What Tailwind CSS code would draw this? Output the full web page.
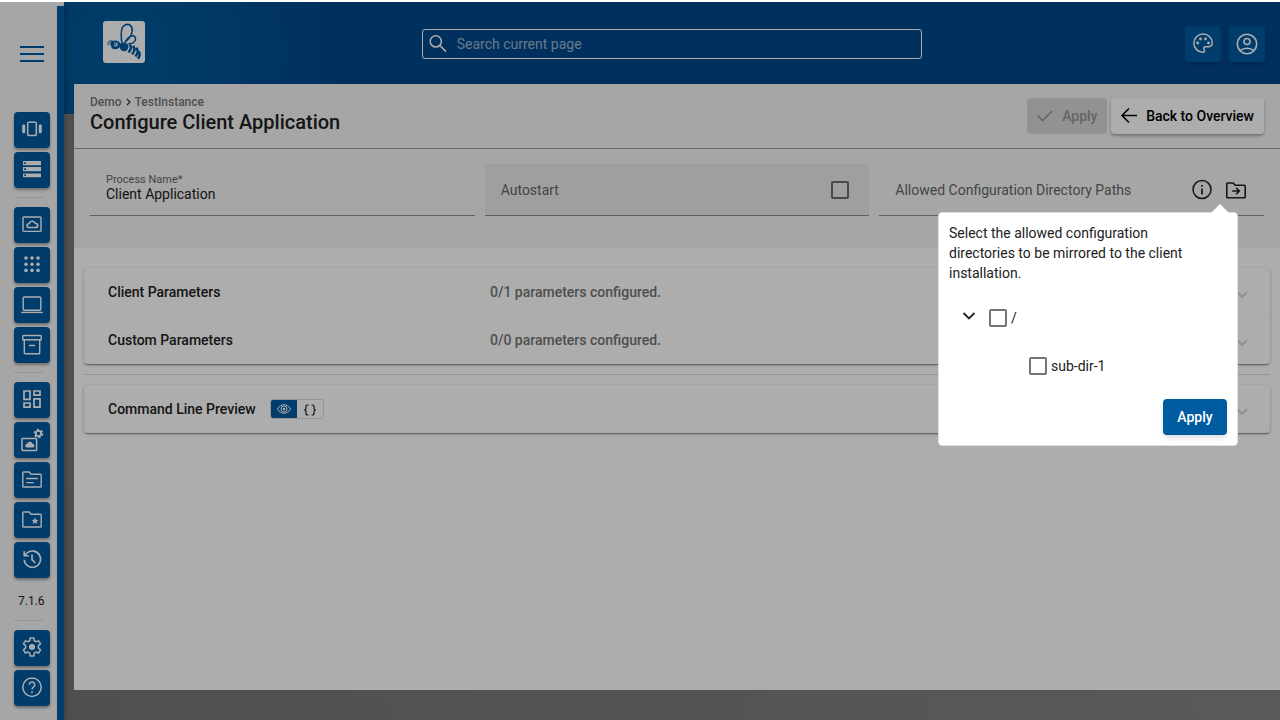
<!DOCTYPE html>
<html lang="en">
<head>
<meta charset="utf-8">
<title>Configure Client Application</title>
<script src="https://cdn.jsdelivr.net/npm/@tailwindcss/browser@4"></script>
</head>
<body class="relative flex min-h-screen flex-col bg-white pt-0.5 font-['Roboto',sans-serif] text-sm text-[#212121]">
<div class="flex flex-1">
  <aside class="z-10 flex w-[57px] shrink-0 flex-col bg-[#f5f5f5] pb-3.5">
    <button aria-label="Menu" class="mt-10 ml-5 flex h-6 w-6 flex-col justify-center gap-[5px]">
      <span class="h-0.5 w-full bg-[#005ba1]"></span><span class="h-0.5 w-full bg-[#005ba1]"></span><span class="h-0.5 w-full bg-[#005ba1]"></span>
    </button>
    <nav class="mt-[46px] ml-3.5 flex flex-col gap-1 text-white [&_button]:flex [&_button]:size-9 [&_button]:items-center [&_button]:justify-center [&_button]:rounded [&_button]:bg-[#005ba1] [&_button]:pb-0.5 [&_button]:shadow-[0_2px_3px_rgba(0,0,0,0.35)] [&_svg]:size-6 [&_svg]:fill-none [&_svg]:stroke-current [&_svg]:stroke-[1.4]">
      <button aria-label="Groups"><svg viewBox="0 0 24 24"><rect x="7.7" y="5.2" width="8.6" height="13.2" rx="1.2" stroke-width="1.5"/><rect x="2.2" y="7.6" width="3" height="8.6" rx="1" fill="currentColor" stroke="none"/><rect x="18.8" y="7.6" width="3" height="8.6" rx="1" fill="currentColor" stroke="none"/></svg></button>
      <button aria-label="Instances"><svg viewBox="0 0 24 24"><path fill="currentColor" stroke="none" fill-rule="evenodd" d="M3 4h18v4.300H3zM4.200 5.200v1.800H6V5.200zM3 10h18v4.300H3zM4.200 11.200v1.800H6v-1.800zM3 16.500h18v3.700H3zM4.200 17.500v1.600H6v-1.600z"/></svg></button>
      <hr class="my-[5px] w-[29px] border-[#dcdcdc]">
      <button aria-label="Software"><svg viewBox="0 0 24 24"><rect x="3" y="5" width="18" height="14.400" rx="1"/><path stroke-width="1.600" d="M8.600 15.500h7a2 2 0 0 0 .2-4c-.5-.1-.8-.2-1-.7a3 3 0 0 0-5.500.4c-.2.500-.4.600-.9.600a1.900 1.900 0 0 0 .2 3.700z"/></svg></button>
      <button aria-label="Applications"><svg viewBox="0 0 24 24"><g fill="currentColor" stroke="none"><circle cx="6" cy="6" r="1.800"/><circle cx="12" cy="6" r="1.800"/><circle cx="18" cy="6" r="1.800"/><circle cx="6" cy="12.200" r="1.800"/><circle cx="12" cy="12.200" r="1.800"/><circle cx="18" cy="12.200" r="1.800"/><circle cx="6" cy="18.400" r="1.800"/><circle cx="12" cy="18.400" r="1.800"/><circle cx="18" cy="18.400" r="1.800"/></g></svg></button>
      <button aria-label="Clients"><svg viewBox="0 0 24 24"><rect x="3.200" y="5" width="17.600" height="13.200" rx="1"/><path d="M1.200 20.400h21.600"/></svg></button>
      <button aria-label="Archive"><svg viewBox="0 0 24 24"><path d="M3.600 3.500h16.800a.8.800 0 0 1 .8.800v3.400H2.800V4.300a.8.800 0 0 1 .8-.8zM4.300 7.700v13.300a.8.800 0 0 0 .8.800h13.800a.8.800 0 0 0 .8-.8V7.700M9 13.500h6"/></svg></button>
      <hr class="my-[5px] w-[29px] border-[#dcdcdc]">
      <button aria-label="Dashboard"><svg viewBox="0 0 24 24"><path stroke-width="1.700" d="M4 4h6v8.300H4zM14 4h6v4.200h-6zM14 11.900h6v8.300h-6zM4 16h6v4.200H4z"/></svg></button>
      <button aria-label="System software"><svg viewBox="0 0 24 24" class="overflow-visible"><rect x="2" y="11.500" width="14.600" height="12" rx=".7" stroke-width="1.500"/><path fill="currentColor" stroke="none" d="M7 20.600h5.500a1.900 1.900 0 0 0 .1-3.800 3 3 0 0 0-5.700.2A1.800 1.800 0 0 0 7 20.600z"/><circle cx="18.500" cy="6.500" r="2.700" stroke-width="1.800"/><circle cx="18.500" cy="6.500" r="4" stroke-width="1.600" stroke-dasharray="2.100 2.089"/></svg></button>
      <button aria-label="Files"><svg viewBox="0 0 24 24"><path d="M3.600 5h5.600l1.900 2.200h9.300a.8.800 0 0 1 .8.800v11.200a.8.800 0 0 1-.8.800H3.600a.8.800 0 0 1-.8-.8V5.800a.8.800 0 0 1 .8-.8zM6.200 11.500h11.600M6.200 15.600h7.600"/></svg></button>
      <button aria-label="Favourites"><svg viewBox="0 0 24 24"><path d="M3.600 5h5.600l1.900 2.200h9.300a.8.800 0 0 1 .8.800v11.200a.8.800 0 0 1-.8.800H3.600a.8.800 0 0 1-.8-.8V5.800a.8.800 0 0 1 .8-.8z"/><path fill="currentColor" stroke="none" d="m15 10.400 1 2.300 2.500.2-1.900 1.600.6 2.500-2.200-1.300-2.200 1.300.6-2.500-1.900-1.600 2.500-.2z"/></svg></button>
      <button aria-label="History"><svg viewBox="0 0 24 24"><path stroke-width="1.600" d="M4.200 12.800A8.200 8.200 0 1 0 7 6L4.300 8.400M4.200 4.300v4.400h4.500M12 7.600v5l3.300 3.300"/></svg></button>
      <p class="mt-[11px] ml-1 text-xs leading-4 text-[#212121]">7.1.6</p>
      <hr class="mt-[7px] mb-[5px] w-[29px] border-[#dcdcdc]">
      <button aria-label="Settings"><svg viewBox="0 0 24 24"><path stroke-width="1.500" d="M10.200 3h3.600l.5 2.700 1.700 1 2.600-.9 1.900 3.100-2.100 1.900v2.200l2.100 1.900-1.900 3.100-2.600-.9-1.700 1-.5 2.900h-3.600l-.5-2.900-1.700-1-2.600.9-1.900-3.100 2.100-1.900v-2.200L3.500 8.900l1.900-3.100 2.600.9 1.700-1z"/><circle cx="12" cy="12" r="3" fill="currentColor" stroke="none"/></svg></button>
      <button aria-label="Help"><svg viewBox="0 0 24 24"><circle cx="12" cy="12.200" r="9.200" stroke-width="1.500"/><path stroke-width="1.500" d="M9.300 9.700a2.700 2.700 0 1 1 4.500 2c-1 .9-1.800 1.400-1.800 2.900"/><circle cx="12" cy="17.300" r="1" fill="currentColor" stroke="none"/></svg></button>
    </nav>
  </aside>
  <div class="z-10 mt-1 w-[7px] shrink-0 bg-[#005ba1] shadow-[2px_0_4px_rgba(0,0,0,0.2)]"></div>

  <div class="flex min-w-0 flex-1 flex-col bg-[linear-gradient(to_bottom,transparent_112px,#7a7a7a_112px,transparent_114px),radial-gradient(circle_at_56px_50px,#005d9c,#00478a_220px),linear-gradient(75deg,#757575,#868686)] bg-[length:100%_100%,100%_112px,100%_100%] bg-no-repeat pb-[30px]">
    <header class="grid h-[82px] shrink-0 grid-cols-[1fr_500px_1fr] items-center">
      <a href="#" aria-label="Home" class="mb-0.5 ml-[39px] block size-[42px] rounded-[3px] bg-white text-[#005ba1]">
        <svg viewBox="0 0 126 126" class="size-full fill-none stroke-current">
          <path stroke-width="4.500" d="M57 69C54 50 54 34 57 22C61 11 74 7 82 13C92 22 88 39 78 52L62 68M64 67C72 52 80 43 90 44C100 46 100 60 91 65C84 69 75 68 66 71"/>
          <path stroke-width="3" d="M12 67C17 60 24 57 33 63M14 73C18 66 23 63 30 66"/>
          <path fill="currentColor" stroke="none" fill-rule="evenodd" d="M25 61C36 56 51 59 52 70C52 82 41 87 31 84C23 81 27 77 22 72zM35 64l9 3v6l-7 4-5-4z"/>
          <circle cx="37" cy="70" r="3" fill="currentColor" stroke="none"/>
          <path fill="currentColor" stroke="none" d="M51 68C61 61 75 67 77 77C74 89 67 93 59 90C51 87 48 77 51 68z"/>
          <path stroke-width="7.500" d="M80 71C87 77 84 87 76 94M90 75C97 82 94 92 87 100M100 80C106 88 104 99 97 106M107 91C112 99 110 107 104 113"/>
        </svg>
      </a>
      <label class="mt-0.5 flex h-[30px] items-center gap-2 rounded-[3px] border border-white pl-[5px] text-white">
        <svg viewBox="0 0 24 24" class="size-[22px] fill-none stroke-current stroke-[1.8]"><circle cx="9" cy="9" r="6.500"/><path d="m13.800 13.800 7 7"/></svg>
        <input type="search" placeholder="Search current page" aria-label="Search current page" class="w-full bg-transparent outline-none placeholder:text-white/60">
      </label>
      <div class="mr-[15px] flex justify-end gap-2 pt-0.5 text-white">
        <button aria-label="Theme" class="flex size-9 items-center justify-center rounded bg-[#005ba1] pb-0.5 shadow-md"><svg viewBox="0 0 24 24" class="size-6 fill-none stroke-current stroke-[1.5]"><path d="M12 3a9 9 0 0 0 0 18.300c1.600 0 2-1.500 1.200-2.600-1-1.500-.3-3 1.500-3h2.500c2.400 0 4-1.700 4-4C21.200 6.700 17 3 12 3z"/><g fill="currentColor" stroke="none"><circle cx="6.700" cy="12" r="1.400"/><circle cx="9.500" cy="8" r="1.400"/><circle cx="14.500" cy="8" r="1.400"/><circle cx="17.500" cy="12" r="1.400"/></g></svg></button>
        <button aria-label="Account" class="flex size-9 items-center justify-center rounded bg-[#005ba1] shadow-md"><svg viewBox="0 0 24 24" class="size-6 fill-none stroke-current stroke-[1.6]"><circle cx="12" cy="12" r="9.700"/><circle cx="12" cy="9.500" r="3"/><path d="M5 18.700c4-3.300 10-3.300 14 0"/></svg></button>
      </div>
    </header>

    <main class="ml-2.5 flex-1 bg-white">
      <div class="flex items-center justify-between border-b border-[#a0a0a0] bg-[#f5f5f5] px-4 py-2 shadow-sm">
        <div class="h-12 pt-0.5">
          <nav aria-label="Breadcrumb" class="flex items-center gap-1 text-xs leading-4 font-medium text-[#757575]"><a href="#">Demo</a><svg viewBox="0 0 5 8" class="h-2 w-[5px] fill-none stroke-[#333]"><path stroke-width="1.200" d="m1 1 3 3-3 3"/></svg><a href="#">TestInstance</a></nav>
          <h1 class="text-xl leading-6 font-medium">Configure Client Application</h1>
        </div>
        <div class="flex gap-1 font-medium">
          <button disabled class="flex h-9 w-20 items-center gap-[7px] rounded bg-[#d8d8d8] pl-2 text-[#959595]"><svg viewBox="0 0 20 20" class="size-5 fill-none stroke-current stroke-[1.600]"><path d="m2.500 9.500 5 5L17 5"/></svg>Apply</button>
          <button class="flex h-9 items-center gap-[7px] rounded bg-white pr-2.5 pl-2 text-black shadow-[0_2px_3px_rgba(0,0,0,0.3)]"><svg viewBox="0 0 20 20" class="size-5 fill-none stroke-current stroke-[1.600]"><path d="M18 9.500H3M10 2.500l-7 7 7 7"/></svg>Back to Overview</button>
        </div>
      </div>

      <form class="grid h-[99px] grid-cols-3 items-start gap-2.5 bg-[#f5f5f5] px-4 pt-[15px]">
        <div class="flex h-[52px] flex-col border-b border-[#8f8f8f] px-4 pt-[9px]">
          <label for="process" class="text-[11px] leading-[13px] text-[#666]">Process Name*</label>
          <input id="process" value="Client Application" class="h-4 bg-transparent leading-4 outline-none">
        </div>
        <label class="flex h-[52px] items-center justify-between rounded-t border-b border-[#8f8f8f] bg-[#ebebeb] px-4 text-[#666]">Autostart
          <input type="checkbox" class="mr-1 size-[18px] appearance-none rounded-xs border-2 border-[#6b6b6b]"></label>
        <div class="flex h-[52px] items-center border-b border-[#8f8f8f] px-4 text-[#666]">
          <span class="flex-1">Allowed Configuration Directory Paths</span>
          <div class="flex gap-2.5 text-[#212121]">
            <button type="button" aria-label="Information"><svg viewBox="0 0 24 24" class="size-6 fill-none stroke-current"><circle cx="12" cy="11.500" r="9" stroke-width="1.500"/><path stroke-width="1.700" d="M12 10.500v6M12 7v1.800"/></svg></button>
            <button type="button" aria-label="Select directories"><svg viewBox="0 0 24 24" class="size-6 fill-none stroke-current stroke-[1.600]"><path d="M3.600 5h5.600l1.900 2.200h9.300a.8.800 0 0 1 .8.800v11a.8.800 0 0 1-.8.800H3.600a.8.800 0 0 1-.8-.8V5.800a.8.800 0 0 1 .8-.8zM8.200 13h7M12.200 9.900l3.100 3.100-3.100 3.100"/></svg></button>
          </div>
        </div>
      </form>

      <div class="px-2.5 pt-5 font-medium">
        <section class="rounded shadow-[0_2px_1px_-1px_rgba(0,0,0,0.3),0_1px_3px_rgba(0,0,0,0.3)]">
          <div class="flex h-12 items-center border-b border-[#f8f8f8] px-6"><h2 class="w-[382px]">Client Parameters</h2><p class="flex-1 text-[#757575]">0/1 parameters configured.</p><svg viewBox="0 0 12 8" class="mt-1.5 mr-[-2px] h-2 w-3 fill-none stroke-[#d4d4d4] stroke-2"><path d="m1 1 5 5 5-5"/></svg></div>
          <div class="flex h-12 items-center px-6"><h2 class="w-[382px]">Custom Parameters</h2><p class="flex-1 text-[#757575]">0/0 parameters configured.</p><svg viewBox="0 0 12 8" class="mt-1.5 mr-[-2px] h-2 w-3 fill-none stroke-[#d4d4d4] stroke-2"><path d="m1 1 5 5 5-5"/></svg></div>
        </section>
        <hr class="my-2.5 border-[#dcdcdc]">
        <section class="flex h-12 items-center gap-3.5 rounded px-6 shadow-[0_2px_1px_-1px_rgba(0,0,0,0.3),0_1px_3px_rgba(0,0,0,0.3)]">
          <h2>Command Line Preview</h2>
          <div class="flex h-5 w-[54px] overflow-hidden rounded-[3px] border border-[#dcdcdc]">
            <button aria-label="Rendered preview" class="flex flex-1 items-center justify-center bg-[#005ba1] text-white"><svg viewBox="0 0 16 12" class="h-3 w-4 fill-none stroke-current"><path d="M1.500 6C4.500.3 11.500.3 14.500 6c-3 5.700-10 5.700-13 0z"/><circle cx="8" cy="6" r="3"/><circle cx="8" cy="6" r="1.300" fill="currentColor" stroke="none"/></svg></button>
            <button aria-label="Raw preview" class="flex flex-1 items-center justify-center pt-0.5"><svg viewBox="0 0 14 12" class="h-3 w-3.5 fill-none stroke-current stroke-[1.200]"><path d="M5.500 1H4.300A1.300 1.300 0 0 0 3 2.300v2.200C3 5.500 2.300 6 1 6c1.300 0 2 .5 2 1.500v2.200A1.300 1.300 0 0 0 4.300 11h1.200M8.500 1h1.200A1.300 1.300 0 0 1 11 2.300v2.200c0 1 .7 1.500 2 1.500-1.300 0-2 .5-2 1.500v2.200A1.300 1.300 0 0 1 9.700 11H8.500"/></svg></button>
          </div>
          <svg viewBox="0 0 12 8" class="mt-1.5 mr-[-2px] ml-auto h-2 w-3 fill-none stroke-[#d4d4d4] stroke-2"><path d="m1 1 5 5 5-5"/></svg>
        </section>
      </div>
    </main>
  </div>
</div>

<div class="absolute inset-x-0 top-0.5 bottom-0 z-20 bg-black/32"></div>

<div role="dialog" aria-label="Allowed directories" class="absolute top-[212px] right-[42px] z-30 w-[300px] rounded border border-[#e0e0e0] bg-white p-2.5">
  <svg viewBox="0 0 18 9" class="absolute -top-[9px] right-2 h-[9px] w-[18px] fill-white"><path d="M0 9 9 0l9 9z"/></svg>
  <p class="max-w-[260px] leading-5">Select the allowed configuration directories to be mirrored to the client installation.</p>
  <ul class="mt-[11px]">
    <li class="flex h-12 items-center pl-3">
      <button aria-label="Collapse" class="mr-3 flex size-4 items-center pb-0.5"><svg viewBox="0 0 16 10" class="h-2.5 w-4 fill-none stroke-current stroke-[1.800]"><path d="m2.500 1 5.500 5.500L13.500 1"/></svg></button>
      <label class="flex items-center gap-1"><input type="checkbox" class="size-[18px] appearance-none rounded-xs border-2 border-[#757575]">/</label>
    </li>
    <li class="flex h-12 items-center pl-20">
      <label class="flex items-center gap-1"><input type="checkbox" class="size-[18px] appearance-none rounded-xs border-2 border-[#757575]">sub-dir-1</label>
    </li>
  </ul>
  <div class="mt-[9px] flex justify-end"><button class="h-9 w-16 rounded bg-[#005ba1] font-medium text-white shadow-md">Apply</button></div>
</div>
</body>
</html>
